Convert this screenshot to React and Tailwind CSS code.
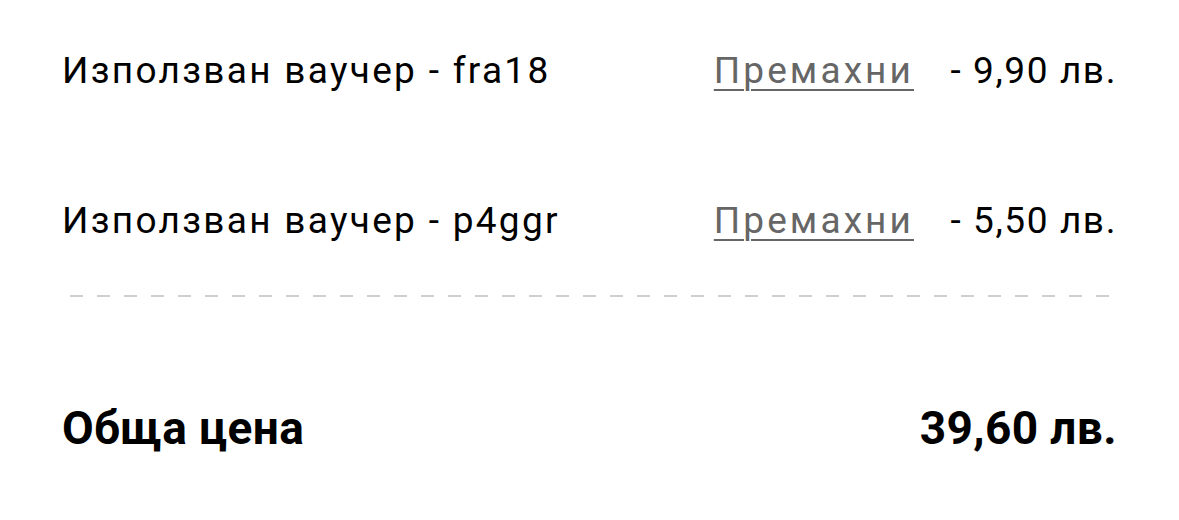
export default function App() {
  const vouchers = [
    { code: "fra18", amount: "- 9,90 лв." },
    { code: "p4ggr", amount: "- 5,50 лв." },
  ];
  return (
    <div className="w-[1179px] h-[520px] overflow-hidden bg-white px-[62px] text-black" style={{ fontFamily: "Roboto, sans-serif" }}>
      {vouchers.map((v, i) => (
        <div key={v.code} className={"flex items-center h-[60px] " + (i === 0 ? "mt-[40px]" : "mt-[90px]")}>
          <div className="flex-1 text-[37px] leading-none tracking-[2.3px]">Използван ваучер - {v.code}</div>
          <a className="text-[37px] leading-none tracking-[3.1px] text-[#666] underline underline-offset-[6px] decoration-2">Премахни</a>
          <div className="ml-[34px] w-[169px] text-right text-[37px] leading-none tracking-[1.6px]">{v.amount}</div>
        </div>
      ))}
      <div className="mt-[45px] ml-[8px] mr-[6px] h-[2px] bg-[repeating-linear-gradient(90deg,#cfcfcf_0_13px,transparent_13px_27px)]"></div>
      <div className="flex items-center justify-between mt-[108px] h-[46px] text-[46px] font-bold leading-none">
        <div className="tracking-[0.4px]">Обща цена</div>
        <div className="tracking-[0.4px]">39,60 лв.</div>
      </div>
    </div>
  );
}
